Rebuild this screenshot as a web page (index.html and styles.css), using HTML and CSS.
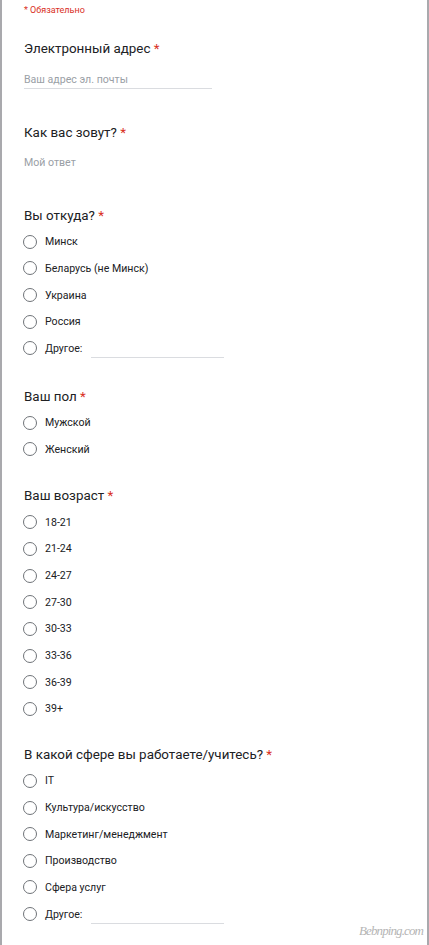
FILE: index.html
```html
<!DOCTYPE html>
<html lang="ru">
<head>
<meta charset="utf-8">
<title>Форма</title>
<link rel="stylesheet" href="styles.css">
</head>
<body>
<div class="page">
  <div class="required-note">* Обязательно</div>

  <section class="q q-first">
    <div class="q-title">Электронный адрес <span class="star">*</span></div>
    <div class="text-input email">Ваш адрес эл. почты</div>
  </section>

  <section class="q q-after-text">
    <div class="q-title">Как вас зовут? <span class="star">*</span></div>
    <div class="text-input short">Мой ответ</div>
  </section>

  <section class="q q-after-text">
    <div class="q-title">Вы откуда? <span class="star">*</span></div>
    <ul class="options">
      <li class="opt"><span class="radio"></span><span class="label">Минск</span></li>
      <li class="opt"><span class="radio"></span><span class="label">Беларусь (не Минск)</span></li>
      <li class="opt"><span class="radio"></span><span class="label">Украина</span></li>
      <li class="opt"><span class="radio"></span><span class="label">Россия</span></li>
      <li class="opt"><span class="radio"></span><span class="label">Другое:</span><span class="other-line"></span></li>
    </ul>
  </section>

  <section class="q q-after-opts q4">
    <div class="q-title">Ваш пол <span class="star">*</span></div>
    <ul class="options">
      <li class="opt"><span class="radio"></span><span class="label">Мужской</span></li>
      <li class="opt"><span class="radio"></span><span class="label">Женский</span></li>
    </ul>
  </section>

  <section class="q q-after-opts">
    <div class="q-title">Ваш возраст <span class="star">*</span></div>
    <ul class="options">
      <li class="opt"><span class="radio"></span><span class="label">18-21</span></li>
      <li class="opt"><span class="radio"></span><span class="label">21-24</span></li>
      <li class="opt"><span class="radio"></span><span class="label">24-27</span></li>
      <li class="opt"><span class="radio"></span><span class="label">27-30</span></li>
      <li class="opt"><span class="radio"></span><span class="label">30-33</span></li>
      <li class="opt"><span class="radio"></span><span class="label">33-36</span></li>
      <li class="opt"><span class="radio"></span><span class="label">36-39</span></li>
      <li class="opt"><span class="radio"></span><span class="label">39+</span></li>
    </ul>
  </section>

  <section class="q q-after-opts q6">
    <div class="q-title">В какой сфере вы работаете/учитесь? <span class="star">*</span></div>
    <ul class="options">
      <li class="opt"><span class="radio"></span><span class="label">IT</span></li>
      <li class="opt"><span class="radio"></span><span class="label">Культура/искусство</span></li>
      <li class="opt"><span class="radio"></span><span class="label">Маркетинг/менеджмент</span></li>
      <li class="opt"><span class="radio"></span><span class="label">Производство</span></li>
      <li class="opt"><span class="radio"></span><span class="label">Сфера услуг</span></li>
      <li class="opt"><span class="radio"></span><span class="label">Другое:</span><span class="other-line"></span></li>
    </ul>
  </section>

  <div class="watermark">Bebnping.com</div>
</div>
</body>
</html>
```

FILE: styles.css
```css
html, body {
  margin: 0;
  padding: 0;
  background: #ffffff;
}

.page {
  position: relative;
  box-sizing: border-box;
  width: 429px;
  min-height: 945px;
  border-left: 2px solid #a9a9ad;
  border-right: 2px solid #a9a9ad;
  padding-left: 22px;
  font-family: Roboto, "Noto Sans", Arial, sans-serif;
  color: #202124;
}

.required-note {
  font-size: 9px;
  line-height: 20px;
  color: #d93025;
}

.q-title {
  font-size: 13.4px;
  line-height: 20px;
  color: #202124;
}

.star {
  color: #d93025;
}

.q-first { margin-top: 19px; }
.q-after-text { margin-top: 34px; }
.q-after-opts { margin-top: 24px; }
.q4 { margin-top: 25px; }
.q6 { margin-top: 23px; }

.text-input {
  font-size: 10.6px;
  color: #9aa0a6;
  line-height: 17px;
}

.text-input.email {
  margin-top: 12px;
  width: 188px;
  border-bottom: 1px solid #dadce0;
}

.text-input.short {
  margin-top: 11px;
  line-height: 18px;
}

.options {
  list-style: none;
  margin: 2.5px 0 0;
  padding: 0;
}

.opt {
  display: flex;
  align-items: center;
  height: 26.65px;
  font-size: 10.6px;
  color: #202124;
}

.radio {
  box-sizing: border-box;
  flex: none;
  width: 14px;
  height: 14px;
  margin-left: -1px;
  border: 1.5px solid #6f7378;
  border-radius: 50%;
}

.label {
  margin-left: 8px;
}

.other-line {
  flex: none;
  width: 133px;
  height: 1px;
  margin-left: 9px;
  margin-top: 19px;
  background: #dadce0;
}

.watermark {
  position: absolute;
  right: 4px;
  bottom: 6px;
  font-family: "Liberation Serif", "DejaVu Serif", serif;
  font-style: italic;
  font-size: 13px;
  letter-spacing: -0.9px;
  color: #b5b5b5;
}
```
